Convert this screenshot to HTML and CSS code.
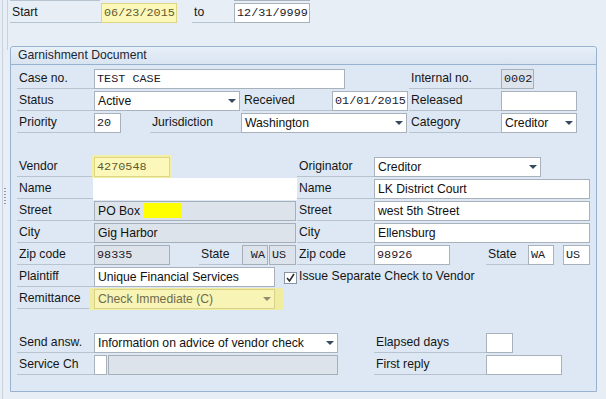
FILE: index.html
```html
<!DOCTYPE html>
<html lang="en">
  <head>
    <meta charset="UTF-8" />
    <meta name="viewport" content="width=device-width, initial-scale=1.0" />
    <title>Garnishment Document</title>
    <link rel="stylesheet" href="styles.css">
  </head>
  <body>
    <div class="screen">
      <div class="splitter">
        <div class="rail">
          <div class="rail-top"></div>
          <div class="grip"></div>
        </div>
      </div>

      <div class="main">
        <!-- bottom edge of the row above, scrolled off -->
        <div class="cut"><span class="cut-a"></span><span class="cut-b"></span></div>

        <div class="toprow">
          <div class="lbl w91">Start</div>
          <div class="fld mono key w76">06/23/2015</div>
          <div class="lbl w42 ml15">to</div>
          <div class="fld mono w76">12/31/9999</div>
        </div>

        <div class="group">
          <div class="group-head">Garnishment Document</div>
          <div class="group-body">
            <div class="row">
              <div class="lbl w77">Case no.</div>
              <div class="fld mono w251">TEST CASE</div>
              <div class="lbl w92 ml64">Internal no.</div>
              <div class="fld mono ro w33">0002</div>
            </div>
            <div class="row">
              <div class="lbl w77">Status</div>
              <div class="fld drop w146">Active</div>
              <div class="lbl w90 ml2">Received</div>
              <div class="fld mono w76">01/01/2015</div>
              <div class="lbl w92 ml1">Released</div>
              <div class="fld w76"></div>
            </div>
            <div class="row">
              <div class="lbl w77">Priority</div>
              <div class="fld mono w27">20</div>
              <div class="lbl w91 ml29">Jurisdiction</div>
              <div class="fld drop w166">Washington</div>
              <div class="lbl w92 ml2">Category</div>
              <div class="fld drop w76">Creditor</div>
            </div>
            <div class="row"></div>

            <div class="row">
              <div class="lbl w77">Vendor</div>
              <div class="glow-sm">
                <div class="fld mono key w76">4270548</div>
              </div>
              <div class="lbl w77 ml127">Originator</div>
              <div class="fld drop w167">Creditor</div>
            </div>
            <div class="row">
              <div class="lbl w76">Name</div>
              <div class="blank w204"></div>
              <div class="lbl w77">Name</div>
              <div class="fld w216">LK District Court</div>
            </div>
            <div class="row">
              <div class="lbl w77">Street</div>
              <div class="fld ro w202">PO Box <span class="mark"></span></div>
              <div class="lbl w77 ml1">Street</div>
              <div class="fld w216">west 5th Street</div>
            </div>
            <div class="row">
              <div class="lbl w77">City</div>
              <div class="fld ro w202">Gig Harbor</div>
              <div class="lbl w77 ml1">City</div>
              <div class="fld w216">Ellensburg</div>
            </div>
            <div class="row">
              <div class="lbl w77">Zip code</div>
              <div class="fld mono ro w76">98335</div>
              <div class="lbl w43 ml29">State</div>
              <div class="fld mono ro right w26">WA</div>
              <div class="fld mono ro w27 ml1">US</div>
              <div class="lbl w77 ml1">Zip code</div>
              <div class="fld mono w76">98926</div>
              <div class="lbl w42 ml36">State</div>
              <div class="fld mono w26">WA</div>
              <div class="fld mono w27 ml9">US</div>
            </div>
            <div class="row">
              <div class="lbl w77">Plaintiff</div>
              <div class="fld w181">Unique Financial Services</div>
              <div class="chk ml9">
                <svg width="11" height="10" viewBox="0 0 11 10">
                  <path d="M2 5 L4.5 8 L9 1" fill="none" stroke="#2b2b2b" stroke-width="1.6" />
                </svg>
              </div>
              <div class="chk-text">Issue Separate Check to Vendor</div>
            </div>
            <div class="row">
              <div class="lbl w77">Remittance</div>
              <div class="glow-lg">
                <div class="fld drop key-dd w181">Check Immediate (C)</div>
              </div>
            </div>
            <div class="row"></div>

            <div class="row">
              <div class="lbl w77">Send answ.</div>
              <div class="fld drop w244">Information on advice of vendor check</div>
              <div class="lbl w112 ml36">Elapsed days</div>
              <div class="fld w27"></div>
            </div>
            <div class="row">
              <div class="lbl w77">Service Ch</div>
              <div class="fld w13"></div>
              <div class="fld ro w230 ml1"></div>
              <div class="lbl w112 ml36">First reply</div>
              <div class="fld w76"></div>
            </div>
          </div>
        </div>
      </div>
    </div>
  </body>
</html>
```

FILE: styles.css
```css
* {
  margin: 0;
  padding: 0;
  box-sizing: border-box;
}
body {
  width: 606px;
  height: 399px;
  overflow: hidden;
  background: #e7eef6;
  font: 12.2px "Liberation Sans", Arial, sans-serif;
  color: #161616;
}
.screen {
  display: flex;
  height: 399px;
}

/* left splitter */
.splitter {
  width: 10px;
  padding-left: 2px;
  flex: none;
}
.splitter .rail {
  height: 100%;
  border-left: 1px solid #c9d2dc;
}
.splitter .rail-top {
  width: 5px;
  height: 50px;
  border-right: 1px solid #c9d2dc;
}
.splitter .grip {
  width: 2px;
  height: 18px;
  margin: 138px 0 0 1px;
  background: repeating-linear-gradient(#8f9ba8 0 1px, transparent 1px 3px);
}

.main {
  width: 596px;
}
.cut {
  display: flex;
  height: 1px;
}
.cut .cut-a {
  width: 90px;
  background: #b7c3cf;
}
.cut .cut-b {
  width: 76px;
  margin-left: 134px;
  background: #a9b1ba;
}
.toprow {
  display: flex;
  height: 20px;
  margin-top: 2px;
}

/* group box */
.group {
  width: 587px;
  margin-top: 23px;
  border: 1px solid #98b3cf;
  border-radius: 3px 3px 0 0;
  background: #dde8f4;
}
.group-head {
  height: 18px;
  padding-left: 7px;
  line-height: 17px;
  border-bottom: 1px solid #98b3cf;
  border-radius: 3px 3px 0 0;
  background: linear-gradient(#e8f0f8, #d8e4f1);
  color: #1b2633;
}
.group-body {
  padding: 4px 0 14px 6px;
}
.row {
  display: flex;
  height: 20px;
  margin-bottom: 2px;
}

/* labels */
.lbl {
  flex: none;
  height: 20px;
  padding-left: 2px;
  line-height: 19px;
  white-space: nowrap;
  border-bottom: 1px solid #b7c3cf;
}

/* fields */
.fld {
  flex: none;
  position: relative;
  height: 20px;
  padding: 0 3px;
  line-height: 18px;
  white-space: nowrap;
  overflow: hidden;
  border: 1px solid #a9b1ba;
  background: #fff;
  color: #111;
}
.fld.mono {
  padding: 0 2px;
  font-family: "Liberation Mono", "Courier New", monospace;
  font-size: 11.8px;
  color: #1c1929;
}
.fld.right {
  text-align: right;
}
.fld.ro {
  background: #dce3ea;
  border-color: #a6aeb7;
}
.fld.key {
  background: #fbf8b9;
  border-color: #ddd684;
  color: #625830;
}
.fld.drop {
  padding-right: 16px;
}
.fld.drop::after {
  content: "";
  position: absolute;
  right: 3px;
  top: 7px;
  border-left: 4px solid transparent;
  border-right: 4px solid transparent;
  border-top: 4px solid #374a60;
}
.fld.key-dd {
  background: #f8f4b6;
  border-color: #d8d28a;
  color: #6f6c48;
}
.fld.key-dd::after {
  border-top-color: #8f8c72;
}
.mark {
  display: inline-block;
  width: 37px;
  height: 15px;
  margin-left: 1px;
  vertical-align: -3px;
  background: #ffff00;
}
.blank {
  flex: none;
  height: 22px;
  margin-top: -1px;
  background: #fff;
}
.glow-sm {
  flex: none;
  height: 24px;
  margin: -2px -2px 0 -2px;
  padding: 2px;
  border-radius: 2px;
  background: #f2eea4;
}
.glow-lg {
  flex: none;
  height: 22px;
  margin: -1px -8px 0 -5px;
  padding: 1px 8px 1px 5px;
  border-radius: 2px;
  background: #f1eda0;
}
.chk {
  flex: none;
  width: 13px;
  height: 12px;
  margin-top: 5px;
  border: 1px solid #8795a4;
  background: #fff;
}
.chk svg {
  display: block;
}
.chk-text {
  margin-left: 2px;
  line-height: 19px;
  white-space: nowrap;
}

/* widths and offsets on the screen grid */
.w13 { width: 13px; }
.w26 { width: 26px; }
.w27 { width: 27px; }
.w33 { width: 33px; }
.w42 { width: 42px; }
.w43 { width: 43px; }
.w76 { width: 76px; }
.w77 { width: 77px; }
.w90 { width: 90px; }
.w91 { width: 91px; }
.w92 { width: 92px; }
.w112 { width: 112px; }
.w146 { width: 146px; }
.w166 { width: 166px; }
.w167 { width: 167px; }
.w181 { width: 181px; }
.w202 { width: 202px; }
.w204 { width: 204px; }
.w216 { width: 216px; }
.w230 { width: 230px; }
.w244 { width: 244px; }
.w251 { width: 251px; }
.ml1 { margin-left: 1px; }
.ml2 { margin-left: 2px; }
.ml9 { margin-left: 9px; }
.ml15 { margin-left: 15px; }
.ml29 { margin-left: 29px; }
.ml36 { margin-left: 36px; }
.ml64 { margin-left: 64px; }
.ml127 { margin-left: 127px; }
```
